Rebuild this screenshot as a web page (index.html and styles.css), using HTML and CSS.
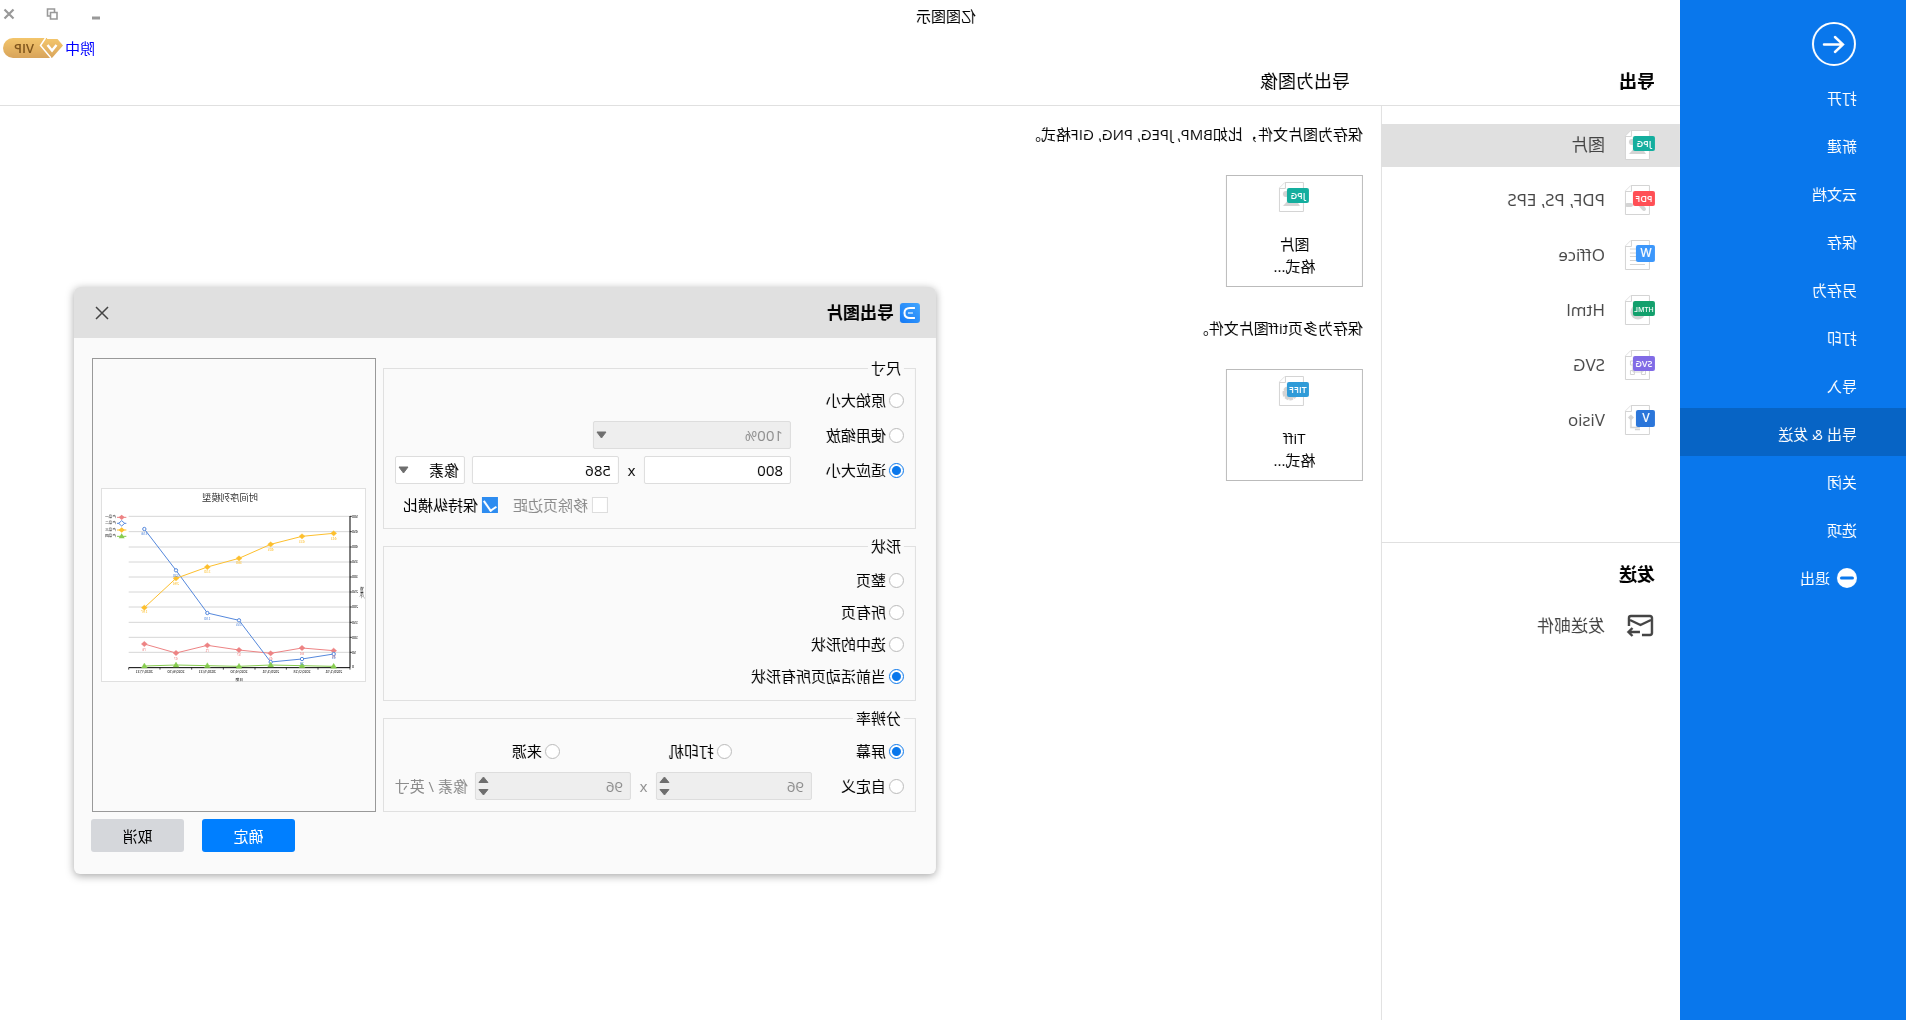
FILE: index.html
```html
<!DOCTYPE html>
<html lang="zh-CN">
<head>
<meta charset="utf-8">
<title>亿图图示</title>
<link rel="stylesheet" href="styles.css">
</head>
<body>
<svg class="defs" aria-hidden="true">
  <symbol id="sheet" viewBox="0 0 30 30">
    <path d="M5.5.5H24L29.500 6V29.500H5.500Z" fill="#fff" stroke="#d4d4d4"/>
    <path d="M23.500.500V6.500H29.500" fill="#fff" stroke="#d4d4d4"/>
  </symbol>
  <symbol id="picture" viewBox="0 0 30 30">
    <use href="#sheet"/>
    <circle cx="23" cy="12" r="3" fill="#d4d4d4"/><path d="M9 24L16 13L26 24Z" fill="#d4d4d4"/>
    <rect y="6" width="22" height="15" rx="2" fill="#14ae9e"/>
  </symbol>
  <symbol id="down" viewBox="0 0 11 8"><path d="M1 1H10L5.500 7Z" fill="#6e6e6e" stroke="#6e6e6e" stroke-linejoin="round"/></symbol>
</svg>

<div class="app">
  <nav class="sidebar">
    <button class="back" aria-label="返回">
      <svg width="44" height="44" viewBox="0 0 44 44" fill="none" stroke="#fff" stroke-width="2"><circle cx="22" cy="22" r="21"/><path d="M32 22.500H13M21 15L13 22.500L21 30" stroke-width="2.400" stroke-linecap="round"/></svg>
    </button>
    <a href="#">打开</a>
    <a href="#">新建</a>
    <a href="#">云文档</a>
    <a href="#">保存</a>
    <a href="#">另存为</a>
    <a href="#">打印</a>
    <a href="#">导入</a>
    <a href="#" class="active">导出 &amp; 发送</a>
    <a href="#">关闭</a>
    <a href="#">选项</a>
    <a href="#"><svg width="20" height="20" viewBox="0 0 20 20"><circle cx="10" cy="10" r="10" fill="#fff"/><path d="M4.500 10H15.500" stroke="#0977ec" stroke-width="3" stroke-linecap="round"/></svg>退出</a>
  </nav>

  <main class="main">
    <header class="top">
      <div class="titlebar">
        <span>亿图图示</span>
        <div class="window-buttons">
          <button aria-label="最小化"><svg width="12" height="12" viewBox="0 0 12 12"><path d="M1 10H9" stroke="#999" stroke-width="3"/></svg></button>
          <button aria-label="还原"><svg width="12" height="12" viewBox="0 0 12 12" fill="none" stroke="#999" stroke-width="1.600"><path d="M1 4.500H7.500V11H1ZM3.500 4V1H10.500V8H8"/></svg></button>
          <button aria-label="关闭"><svg width="12" height="12" viewBox="0 0 12 12"><path d="M1.500 1.500L10.500 10.500M10.500 1.500L1.500 10.500" stroke="#999" stroke-width="2.200"/></svg></button>
        </div>
      </div>
      <div class="account">
        <a href="#">隙中</a>
        <svg width="60" height="20" viewBox="0 0 60 20">
          <defs><linearGradient id="gold" x2="0" y2="1"><stop stop-color="#f3c56b"/><stop offset="1" stop-color="#d8a45b"/></linearGradient></defs>
          <path d="M16 0H50A10 10 0 0 1 50 20H12Z" fill="url(#gold)"/>
          <path d="M5.500 1H17.500L22.500 7.500L11.500 20.500L0 7.500Z" fill="url(#gold)"/>
          <path d="M17.500 0L22.500 7.500L12 20" fill="none" stroke="#fff" stroke-width="1.500"/>
          <path d="M6.500 7L11 12.500L15.500 7" fill="none" stroke="#fff" stroke-width="2.400"/>
          <text x="29" y="15" class="vip">VIP</text>
        </svg>
      </div>
      <div class="headings">
        <h2>导出</h2>
        <h1>导出为图像</h1>
      </div>
    </header>

    <div class="columns">
      <div class="panel">
        <ul class="formats">
          <li class="current"><a href="#"><svg class="icon" viewBox="0 0 30 30"><use href="#picture"/><text x="11" y="17" class="tag">JPG</text></svg>图片</a></li>
          <li><a href="#"><svg class="icon" viewBox="0 0 30 30"><use href="#sheet"/><path d="M11 24L17 17M24 20H28" stroke="#d4d4d4" stroke-width="4" stroke-linecap="round" fill="none"/><rect y="6" width="22" height="15" rx="2" fill="#ff4f55"/><text x="11" y="17" class="tag">PDF</text></svg>PDF, PS, EPS</a></li>
          <li><a href="#"><svg class="icon" viewBox="0 0 30 30"><use href="#sheet"/><path d="M10 9H25M10 13H25M10 16.500H25M10 20.500H25M10 24.500H25" stroke="#d4d4d4"/><rect y="5" width="19" height="17" rx="2" fill="#3c97fb"/><text x="9" y="17" class="letter">W</text></svg>Office</a></li>
          <li><a href="#"><svg class="icon" viewBox="0 0 30 30"><use href="#sheet"/><circle cx="17" cy="17" r="7.500" fill="#d4d4d4"/><rect y="6" width="22" height="15" rx="2" fill="#12a06c"/><text x="11" y="17" class="tag small">HTML</text></svg>Html</a></li>
          <li><a href="#"><svg class="icon" viewBox="0 0 30 30"><use href="#sheet"/><path d="M12 13H22V22H12ZM20.500 11H24.500V15H20.500ZM20.500 20.500H24.500V24.500H20.500ZM9.500 20.500H13.500V24.500H9.500Z" fill="#fff" stroke="#d4d4d4"/><rect y="6" width="22" height="15" rx="2" fill="#816be6"/><text x="11" y="17" class="tag">SVG</text></svg>SVG</a></li>
          <li><a href="#"><svg class="icon" viewBox="0 0 30 30"><use href="#sheet"/><path d="M24 9.500L27 12.500L24 15.500L21 12.500Z" fill="#d4d4d4"/><path d="M24 12V22.500H15M15 24.500H20" stroke="#d4d4d4" stroke-width="1.500" fill="none"/><rect y="5" width="19" height="17" rx="2" fill="#2b76da"/><text x="9" y="17" class="letter">V</text></svg>Visio</a></li>
        </ul>
        <section class="send">
          <h2>发送</h2>
          <a href="#"><svg width="30" height="24" viewBox="0 0 30 24" fill="none" stroke="#444" stroke-width="2.400"><path d="M13 21H5Q3 21 3 19V4Q3 2 5 2H24Q26 2 26 4V12"/><path d="M4 6L14.500 11L25 6"/><path d="M15 18H26M22.500 14L26.500 18L22.500 22"/></svg>发送邮件</a>
        </section>
      </div>

      <div class="content">
        <p>保存为图片文件，比如BMP, JPEG, PNG, GIF格式。</p>
        <button class="card"><svg class="icon" viewBox="0 0 30 30"><use href="#picture"/><text x="11" y="17" class="tag">JPG</text></svg><span>图片<br>格式...</span></button>
        <p class="second">保存为多页tiff图片文件。</p>
        <button class="card"><svg class="icon" viewBox="0 0 30 30"><use href="#sheet"/><circle cx="19" cy="17" r="5.500" fill="#fff" stroke="#d4d4d4" stroke-width="4" stroke-dasharray="3 1"/><circle cx="19" cy="17" r="5" fill="none" stroke="#d4d4d4" stroke-width="3"/><rect y="6" width="22" height="15" rx="2" fill="#2f9bd8"/><text x="11" y="17" class="tag">TIFF</text></svg><span>Tiff<br>格式...</span></button>
      </div>
    </div>
  </main>

  <form class="dialog" role="dialog" aria-labelledby="dialog-title">
    <header>
      <svg width="20" height="20" viewBox="0 0 20 20"><defs><linearGradient id="logo" x2="1" y2="1" x1="0" y1="0"><stop stop-color="#42a6ff"/><stop offset="1" stop-color="#1479f5"/></linearGradient></defs><rect width="20" height="20" rx="3" fill="url(#logo)"/><path d="M5 5H10Q15.500 5 15.500 10T10 15H5" fill="none" stroke="#fff" stroke-width="2"/><path d="M7 10H12" stroke="#9fd0ff" stroke-width="2"/></svg>
      <h2 id="dialog-title">导出图片</h2>
      <button type="button" aria-label="关闭"><svg width="14" height="14" viewBox="0 0 14 14"><path d="M1 1L13 13M13 1L1 13" stroke="#444" stroke-width="1.500"/></svg></button>
    </header>
    <div class="dialog-body">
      <div class="settings">
        <fieldset class="size">
          <legend>尺寸</legend>
          <div class="row"><label><input type="radio" name="size">原始大小</label></div>
          <div class="row">
            <label><input type="radio" name="size">使用缩放</label>
            <span class="select zoom"><select aria-label="缩放" disabled><option>100%</option></select><svg width="11" height="8"><use href="#down"/></svg></span>
          </div>
          <div class="row">
            <label><input type="radio" name="size" checked>适应大小</label>
            <input class="field" type="text" value="800" aria-label="宽度"><span class="times">x</span><input class="field" type="text" value="586" aria-label="高度">
            <span class="select unit"><select aria-label="单位"><option>像素</option></select><svg width="11" height="8"><use href="#down"/></svg></span>
          </div>
          <div class="row checks">
            <label class="off"><input type="checkbox" disabled>移除页边距</label>
            <label><input type="checkbox" checked>保持纵横比</label>
          </div>
        </fieldset>
        <fieldset class="shape">
          <legend>形状</legend>
          <div class="row"><label><input type="radio" name="shape">整页</label></div>
          <div class="row"><label><input type="radio" name="shape">所有页</label></div>
          <div class="row"><label><input type="radio" name="shape">选中的形状</label></div>
          <div class="row"><label><input type="radio" name="shape" checked>当前活动页所有形状</label></div>
        </fieldset>
        <fieldset class="resolution">
          <legend>分辨率</legend>
          <div class="row sources">
            <label><input type="radio" name="dpi" checked>屏幕</label>
            <label><input type="radio" name="dpi">打印机</label>
            <label><input type="radio" name="dpi">来源</label>
          </div>
          <div class="row custom">
            <label><input type="radio" name="dpi">自定义</label>
            <span class="spin"><input type="number" value="96" aria-label="水平分辨率" disabled><svg width="11" height="20" viewBox="0 0 11 20"><path d="M1 6.500H10L5.500 1ZM1 13.500H10L5.500 19Z" fill="#6e6e6e" stroke="#6e6e6e" stroke-linejoin="round"/></svg></span>
            <span class="times">x</span>
            <span class="spin"><input type="number" value="96" aria-label="垂直分辨率" disabled><svg width="11" height="20" viewBox="0 0 11 20"><path d="M1 6.500H10L5.500 1ZM1 13.500H10L5.500 19Z" fill="#6e6e6e" stroke="#6e6e6e" stroke-linejoin="round"/></svg></span>
            <span class="per">像素 / 英寸</span>
          </div>
        </fieldset>
      </div>
      <div class="preview">
        <svg class="chart" viewBox="0 0 795 582">
          <defs>
            <path id="dia" d="M0-8L9 0L0 8L-9 0Z"/>
            <path id="tri" d="M0-9L9 6H-9Z"/>
          </defs>
          <rect x="1.500" y="1.500" width="792" height="579" fill="#fff" stroke="#e0e0e0" stroke-width="3"/>
          <text x="408" y="38" class="chart-title">时间序列模型</text>
          <path d="M48 85H712M48 131H712M48 177H712M48 222H712M48 267H712M48 312H712M48 357H712M48 403H712M48 448H712M48 493H712" stroke="#d6d6d6" stroke-width="3"/>
          <path d="M48 84V539H712" fill="none" stroke="#000" stroke-width="3"/>
          <path d="M42 85H48M42 131H48M42 177H48M42 222H48M42 267H48M42 312H48M42 357H48M42 403H48M42 448H48M42 493H48M48 539V545M144 539V545M239 539V545M333 539V545M428 539V545M523 539V545M618 539V545M712 539V545" stroke="#000" stroke-width="2"/>
          <g class="axis end"><text x="42" y="89">500</text><text x="42" y="135">450</text><text x="42" y="181">400</text><text x="42" y="226">350</text><text x="42" y="271">300</text><text x="42" y="316">250</text><text x="42" y="361">200</text><text x="42" y="407">150</text><text x="42" y="452">100</text><text x="42" y="497">50</text><text x="42" y="541">0</text></g>
          <g class="axis mid"><text x="97" y="554">2020/1/31</text><text x="192" y="554">2020/2/28</text><text x="286" y="554">2020/3/31</text><text x="381" y="554">2020/4/30</text><text x="476" y="554">2020/5/31</text><text x="570" y="554">2020/6/30</text><text x="665" y="554">2020/7/31</text><text x="380" y="579">日期</text><text x="12" y="306">销</text><text x="12" y="318">量</text><text x="12" y="330">/个</text></g>
          <g fill="#ed8384" stroke="#ed8384"><polyline points="97,488 192,480 286,496 381,486 476,472 570,495 665,468" fill="none" stroke-width="3"/><use href="#dia" x="97" y="488"/><use href="#dia" x="192" y="480"/><use href="#dia" x="286" y="496"/><use href="#dia" x="381" y="486"/><use href="#dia" x="476" y="472"/><use href="#dia" x="570" y="495"/><use href="#dia" x="665" y="468"/></g>
          <g fill="#fff" stroke="#5588dc" stroke-width="3"><polyline points="97,498 192,513 286,522 381,397 476,375 570,247 665,123" fill="none"/><circle cx="97" cy="498" r="5"/><circle cx="192" cy="513" r="5"/><circle cx="286" cy="522" r="5"/><circle cx="381" cy="397" r="5"/><circle cx="476" cy="375" r="5"/><circle cx="570" cy="247" r="5"/><circle cx="665" cy="123" r="5"/></g>
          <g fill="#fdbf2d" stroke="#fdbf2d"><polyline points="97,136 192,145 286,169 381,211 476,237 570,271 665,359" fill="none" stroke-width="3"/><use href="#dia" x="97" y="136"/><use href="#dia" x="192" y="145"/><use href="#dia" x="286" y="169"/><use href="#dia" x="381" y="211"/><use href="#dia" x="476" y="237"/><use href="#dia" x="570" y="271"/><use href="#dia" x="665" y="359"/></g>
          <g fill="#86cc4f" stroke="#86cc4f"><polyline points="97,535 192,533 286,531 381,535 476,533 570,531 665,534" fill="none" stroke-width="3"/><use href="#tri" x="97" y="535"/><use href="#tri" x="192" y="533"/><use href="#tri" x="286" y="531"/><use href="#tri" x="381" y="535"/><use href="#tri" x="476" y="533"/><use href="#tri" x="570" y="531"/><use href="#tri" x="665" y="534"/></g>
          <g class="axis mid" fill="#ed8384"><text x="97" y="510">55</text><text x="192" y="500">64</text><text x="286" y="515">45</text><text x="381" y="505">57</text><text x="476" y="492">71</text><text x="570" y="515">47</text><text x="665" y="488">76</text></g>
          <g class="axis mid" fill="#5588dc"><text x="97" y="514">45</text><text x="192" y="530">29</text><text x="381" y="415">155</text><text x="476" y="395">180</text><text x="570" y="266">320</text><text x="665" y="140">456</text></g>
          <g class="axis mid" fill="#fdbf2d"><text x="97" y="155">443</text><text x="192" y="164">433</text><text x="286" y="188">405</text><text x="381" y="229">360</text><text x="476" y="254">330</text><text x="570" y="290">294</text><text x="665" y="376">197</text></g>
          <g stroke-width="3"><path d="M719 88H747" stroke="#ed8384"/><use href="#dia" x="733" y="88" fill="#ed8384"/><path d="M719 106H747" stroke="#5588dc"/><use href="#dia" x="733" y="106" fill="#fff" stroke="#5588dc"/><path d="M719 126H747" stroke="#fdbf2d"/><use href="#dia" x="733" y="126" fill="#fdbf2d"/><path d="M719 145H747" stroke="#86cc4f"/><use href="#tri" x="733" y="145" fill="#86cc4f"/></g>
          <g class="axis"><text x="750" y="89">产品一</text><text x="750" y="109">产品二</text><text x="750" y="128">产品三</text><text x="750" y="148">产品四</text></g>
        </svg>
      </div>
    </div>
    <footer>
      <button type="button" class="ok">确定</button>
      <button type="button">取消</button>
    </footer>
  </form>
</div>
</body>
</html>
```

FILE: styles.css
```css
* { box-sizing: border-box; }

body {
  margin: 0;
  background: #fff;
  color: #000;
  font: 15px/22px "Open Sans", "Noto Sans CJK SC", sans-serif;
}

h1, h2, p, ul { margin: 0; padding: 0; }
h1, h2 { font-size: 18px; line-height: 26px; }
h1 { font-weight: 400; }
ul { list-style: none; }
a { color: inherit; text-decoration: none; }
button, input, select { font: inherit; color: inherit; }
button { border: 0; padding: 0; background: none; cursor: pointer; }
svg { display: block; flex: none; }
.defs { position: absolute; width: 0; height: 0; }

/* The whole window is shown flipped left to right. */
.app {
  position: relative;
  display: grid;
  grid-template-columns: 226px 1fr;
  min-height: 100vh;
  transform: scaleX(-1);
}

/* Sidebar */
.sidebar { background: #0977ec; color: #fff; }
.back { display: block; margin: 22px 0 6px 50px; }
.sidebar a {
  display: flex;
  align-items: center;
  gap: 7px;
  height: 48px;
  padding: 3px 0 0 49px;
}
.sidebar .active { background: #0764c5; }

/* Top bar */
.main { display: flex; flex-direction: column; min-width: 0; }
.top { height: 106px; border-bottom: 1px solid #e0e0e0; }
.titlebar {
  display: flex;
  justify-content: space-between;
  align-items: center;
  height: 32px;
  padding: 0 3px 4px calc(50vw - 249px);
}
.titlebar > span { padding-top: 3px; }
.window-buttons { display: flex; gap: 31px; }
.account {
  display: flex;
  justify-content: flex-end;
  align-items: center;
  gap: 2px;
  height: 32px;
  padding-right: 3px;
}
.account a { color: #00f; }
.vip { font: 600 13px "Open Sans", sans-serif; fill: #80561c; }
.headings, .columns { display: grid; grid-template-columns: 299px 1fr; }
.headings { padding-top: 4px; }
.headings h2 { padding-left: 25px; }
.headings h1 { padding-left: 31px; }
.columns { flex: 1; }

/* Format list */
.panel { border-right: 1px solid #e0e0e0; color: #444; font-size: 17px; }
.panel a { display: flex; align-items: center; gap: 20px; height: 42px; padding-left: 25px; }
.icon { width: 30px; height: 30px; }
.formats {
  display: flex;
  flex-direction: column;
  gap: 12px;
  height: 437px;
  padding-top: 18px;
  border-bottom: 1px solid #e0e0e0;
}
.formats li { height: 43px; }
.current { background: #e0e0e0; }
.tag, .letter {
  font: 600 9px "Open Sans", sans-serif;
  fill: #fff;
  text-anchor: middle;
}
.small { font-size: 7px; }
.letter { font-size: 12px; }
.send { padding-top: 18px; }
.send h2 { padding-left: 25px; margin-bottom: 18px; color: #000; }

/* Export choices */
.content { padding: 17px 18px; }
.card {
  display: flex;
  flex-direction: column;
  align-items: center;
  justify-content: space-between;
  width: 137px;
  height: 112px;
  margin-top: 30px;
  padding: 6px 0 9px;
  border: 1px solid #bbb;
}
.content .second { margin-top: 30px; }

/* Export dialog */
.dialog {
  position: absolute;
  top: 287px;
  right: 74px;
  width: 862px;
  border-radius: 6px;
  background: #fafafa;
  box-shadow: 0 2px 8px rgba(0, 0, 0, .35);
}
.dialog header {
  display: flex;
  align-items: center;
  gap: 6px;
  height: 51px;
  padding: 0 21px 0 16px;
  border-radius: 6px 6px 0 0;
  background: #e0e0e0;
}
.dialog header h2 { flex: 1; font-size: 17px; }
.dialog-body { display: flex; gap: 7px; padding: 20px 18px 0 20px; }
.settings { display: flex; flex: 1; flex-direction: column; gap: 7px; min-width: 0; }
.preview {
  display: grid;
  flex: none;
  place-items: center;
  width: 284px;
  border: 1px solid #999;
}
.chart { width: 265px; height: 194px; }
.chart-title { font: 28px "Noto Sans CJK SC", sans-serif; text-anchor: middle; fill: #333; }
.axis { font: 11px "Noto Sans CJK SC", sans-serif; }
.mid { text-anchor: middle; }
.end { text-anchor: end; }

fieldset {
  min-width: 0;
  margin: 0;
  padding: 8px 11px;
  border: 1px solid #e0e0e0;
}
legend { padding: 0 3px; line-height: 20px; }
.row { display: flex; align-items: center; height: 28px; }
.size { padding-bottom: 9px; }
.size .row + .row, .custom { margin-top: 7px; }
.shape .row { height: 32px; }
.resolution { padding-top: 9px; padding-bottom: 11px; }
.row label { display: flex; flex: none; align-items: center; gap: 3px; }
.size .row > label:first-child { width: 113px; }
.size .checks { gap: 15px; padding-left: 296px; }
.size .checks > label:first-child { width: auto; }
.size .checks label { gap: 4px; }
.off { color: #8c8c8c; }

input[type="radio"] {
  appearance: none;
  width: 15px;
  height: 15px;
  margin: 0;
  border: 1px solid #bbb;
  border-radius: 50%;
  background: #fff;
}
input[type="radio"]:checked {
  border-color: #0977ec;
  background: radial-gradient(circle, #0977ec 4px, #fff 5px);
}
input[type="checkbox"] {
  display: grid;
  place-items: center;
  appearance: none;
  width: 16px;
  height: 16px;
  margin: 0;
  border: 1px solid #ddd;
  background: #fff;
}
input[type="checkbox"]:checked { border-color: #2d8cf0; background: #2d8cf0; }
input[type="checkbox"]:checked::after {
  content: "";
  width: 6px;
  height: 11px;
  margin-bottom: 2px;
  border: solid #fff;
  border-width: 0 2px 2px 0;
  transform: rotate(35deg);
}

.field, .select select, .spin input {
  width: 100%;
  height: 28px;
  padding: 0 7px;
  border: 1px solid #ddd;
  border-radius: 2px;
  background: #fff;
  appearance: none;
}
.row .field { width: 147px; }
.select, .spin { display: grid; flex: none; align-items: center; }
.select > *, .spin > * { grid-area: 1 / 1; }
.select svg, .spin svg { justify-self: end; margin-right: 3px; pointer-events: none; }
.zoom { width: 198px; }
.unit { width: 70px; margin-left: 7px; }
.unit select { padding: 0 5px; }
.times { flex: none; width: 25px; text-align: center; }
.row select:disabled, .spin input:disabled {
  background: #eee;
  color: #8c8c8c;
  opacity: 1;
}
.spin { width: 156px; }
.spin input::-webkit-inner-spin-button { display: none; }
.sources label { width: 172px; }
.row.custom label { width: 92px; }
.custom .times, .per { color: #8c8c8c; }
.per { padding-left: 7px; white-space: nowrap; }

.dialog footer {
  display: flex;
  justify-content: flex-end;
  gap: 18px;
  padding: 7px 17px 22px;
}
.dialog footer button {
  width: 93px;
  height: 33px;
  border-radius: 3px;
  background: #d5d7db;
}
.dialog footer .ok { background: #007fff; color: #fff; }
```
